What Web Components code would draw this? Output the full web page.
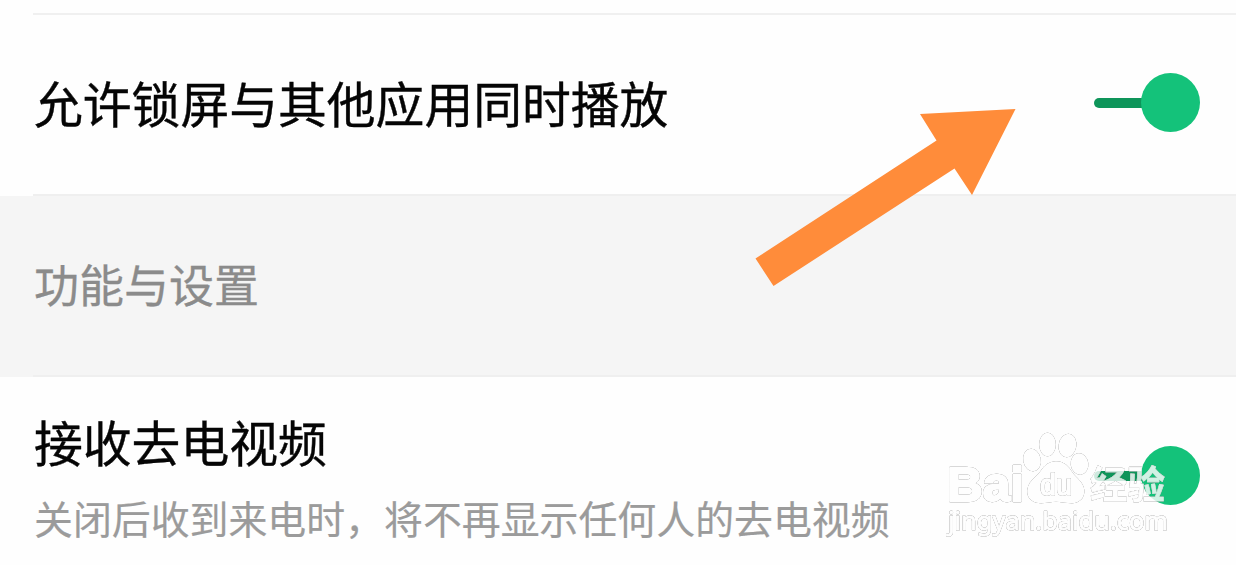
<!DOCTYPE html>
<html lang="zh-CN">
<head>
<meta charset="utf-8">
<title>设置</title>
<style>
  body {
    margin: 0;
    background: #fefefe;
    font-family: "Noto Sans CJK SC", sans-serif;
    overflow: hidden;
  }
</style>
</head>
<body>
<settings-page>
  <setting-row divided style="--height: 181px; --text-drop: -4px; --action-drop: -3px">
    允许锁屏与其他应用同时播放
    <toggle-switch slot="action"></toggle-switch>
  </setting-row>
  <section-title>功能与设置</section-title>
  <setting-row style="--height: 189px; --text-drop: 15px; --action-drop: 7px">
    接收去电视频
    <span slot="note">关闭后收到来电时，将不再显示任何人的去电视频</span>
    <toggle-switch slot="action"></toggle-switch>
  </setting-row>
  <pointer-arrow slot="overlay"></pointer-arrow>
  <water-mark slot="overlay"></water-mark>
</settings-page>

<script>
class SettingsPage extends HTMLElement {
  constructor() {
    super();
    this.attachShadow({ mode: "open" });
  }

  static get styles() {
    return /* css */`
      :host {
        display: flex;
        flex-direction: column;
        box-sizing: border-box;
        width: 1236px;
        height: 565px;
        padding-top: 13px;
        position: relative;
        overflow: hidden;
      }
    `;
  }

  connectedCallback() {
    this.shadowRoot.innerHTML = /* html */`
    <style>${SettingsPage.styles}</style>
    <slot></slot>
    <slot name="overlay"></slot>`;
  }
}

class SettingRow extends HTMLElement {
  constructor() {
    super();
    this.attachShadow({ mode: "open" });
  }

  static get styles() {
    return /* css */`
      :host {
        display: flex;
        flex: none;
        box-sizing: border-box;
        height: var(--height);
        padding-right: 36px;
        margin-left: 33px;
        align-items: center;
        justify-content: space-between;
      }

      :host([divided]) {
        background: linear-gradient(#f0f0f0, #f0f0f0) top / 100% 2px no-repeat;
      }

      .text {
        display: flex;
        flex-direction: column;
        gap: 16px;
        padding-left: 1px;
        margin-top: var(--text-drop);
        white-space: nowrap;
      }

      .title {
        color: #050505;
        font-size: 48.8px;
        line-height: 60px;
        -webkit-text-stroke: 0.4px;
      }

      ::slotted([slot="note"]) {
        display: block;
        color: #9b9b9b;
        font-size: 38.9px;
        line-height: 60px;
        -webkit-text-stroke: 0.2px;
      }

      ::slotted([slot="action"]) {
        margin-top: var(--action-drop);
      }
    `;
  }

  connectedCallback() {
    this.shadowRoot.innerHTML = /* html */`
    <style>${SettingRow.styles}</style>
    <div class="text">
      <div class="title"><slot></slot></div>
      <slot name="note"></slot>
    </div>
    <slot name="action"></slot>`;
  }
}

class SectionTitle extends HTMLElement {
  constructor() {
    super();
    this.attachShadow({ mode: "open" });
  }

  static get styles() {
    return /* css */`
      :host {
        display: flex;
        flex: none;
        box-sizing: border-box;
        height: 183px;
        align-items: center;
        padding: 0 0 4px 34px;
        color: #8b8b8b;
        background:
          linear-gradient(#efefef, #efefef) 33px 0 / 100% 2px no-repeat,
          linear-gradient(#fefefe, #fefefe) 0 0 / 33px 2px no-repeat,
          linear-gradient(#efefef, #efefef) 33px 100% / 100% 2px no-repeat,
          #f5f5f5;
        font-size: 45px;
        line-height: 60px;
        -webkit-text-stroke: 0.3px;
      }
    `;
  }

  connectedCallback() {
    this.shadowRoot.innerHTML = /* html */`
    <style>${SectionTitle.styles}</style>
    <slot></slot>`;
  }
}

class ToggleSwitch extends HTMLElement {
  constructor() {
    super();
    this.attachShadow({ mode: "open" });
  }

  static get styles() {
    return /* css */`
      :host {
        display: flex;
        align-items: center;
      }

      .track {
        width: 47px;
        height: 10px;
        margin: 2px -2px 0 0;
        padding-right: 2px;
        border-radius: 5px 0 0 5px;
        background: #0e955a;
      }

      .thumb {
        width: 59px;
        height: 59px;
        border-radius: 50%;
        background: #14c27a;
      }
    `;
  }

  connectedCallback() {
    this.shadowRoot.innerHTML = /* html */`
    <style>${ToggleSwitch.styles}</style>
    <div class="track"></div>
    <div class="thumb"></div>`;
  }
}

class PointerArrow extends HTMLElement {
  constructor() {
    super();
    this.attachShadow({ mode: "open" });
  }

  static get styles() {
    return /* css */`
      :host {
        display: block;
        position: absolute;
        left: 750px;
        top: 100px;
      }

      svg {
        display: block;
      }
    `;
  }

  connectedCallback() {
    this.shadowRoot.innerHTML = /* html */`
    <style>${PointerArrow.styles}</style>
    <svg width="270" height="190" viewBox="750 100 270 190">
      <path fill="#ff8c3a" d="M1015.5 109 L920 114 L936.5 140.5 L755.5 258.5 L773.5 286 L954.5 168.5 L972 195 Z"/>
    </svg>`;
  }
}

class WaterMark extends HTMLElement {
  constructor() {
    super();
    this.attachShadow({ mode: "open" });
  }

  static get styles() {
    return /* css */`
      :host {
        display: block;
        position: absolute;
        left: 940px;
        top: 425px;
      }

      svg {
        display: block;
        opacity: 0.8;
      }

      /* white body with a thin grey rim round it */
      .ink {
        fill: #fff;
        stroke: #fff;
        stroke-width: 1.6;
        stroke-linejoin: round;
        filter: drop-shadow(0 0 0.6px #808080) drop-shadow(0 0 0.5px #b0b0b0);
      }

      text {
        font-family: "Liberation Sans", sans-serif;
      }

      .brand {
        font-weight: bold;
        font-size: 49px;
        stroke-width: 2.4;
      }

      .du {
        font-size: 30px;
        stroke-width: 1.6;
      }

      .cjk {
        font-family: "Noto Sans CJK SC", sans-serif;
        font-weight: 700;
        font-size: 38px;
        stroke-width: 0.6;
      }

      .url {
        font-family: "Noto Sans", sans-serif;
        font-size: 26px;
        stroke-width: 1;
      }
    `;
  }

  connectedCallback() {
    this.shadowRoot.innerHTML = /* html */`
    <style>${WaterMark.styles}</style>
    <svg width="250" height="125" viewBox="940 425 250 125">
      <text class="ink brand" x="947" y="500.5" textLength="77" lengthAdjust="spacingAndGlyphs">Bai</text>
      <g class="ink">
        <ellipse cx="1032" cy="460" rx="8" ry="10.5" transform="rotate(-12 1032 460)"/>
        <ellipse cx="1047.5" cy="444.5" rx="7.5" ry="11"/>
        <ellipse cx="1067.5" cy="445.5" rx="8" ry="11" transform="rotate(10 1067.5 445.5)"/>
        <ellipse cx="1079.5" cy="464" rx="8" ry="10" transform="rotate(-8 1079.5 464)"/>
        <path d="M1056 462c-8 0-12 4.500-15.500 10.500-4 6-12 9-12.500 18-.5 8 6 12 13 12 6 0 9-1.500 15-1.500s9 1.500 16 1.500c7 0 12-5 11.500-12.500-.5-8-8-11-12-17.500-3.500-5.500-7.500-10.500-15.500-10.500z"/>
      </g>
      <text class="ink du" x="1040" y="495" textLength="32" lengthAdjust="spacingAndGlyphs">du</text>
      <text class="ink cjk" x="1090" y="498" textLength="75" lengthAdjust="spacingAndGlyphs">经验</text>
      <text class="ink url" x="948" y="530" textLength="220" lengthAdjust="spacingAndGlyphs">jingyan.baidu.com</text>
    </svg>`;
  }
}

customElements.define("settings-page", SettingsPage);
customElements.define("setting-row", SettingRow);
customElements.define("section-title", SectionTitle);
customElements.define("toggle-switch", ToggleSwitch);
customElements.define("pointer-arrow", PointerArrow);
customElements.define("water-mark", WaterMark);
</script>
</body>
</html>
